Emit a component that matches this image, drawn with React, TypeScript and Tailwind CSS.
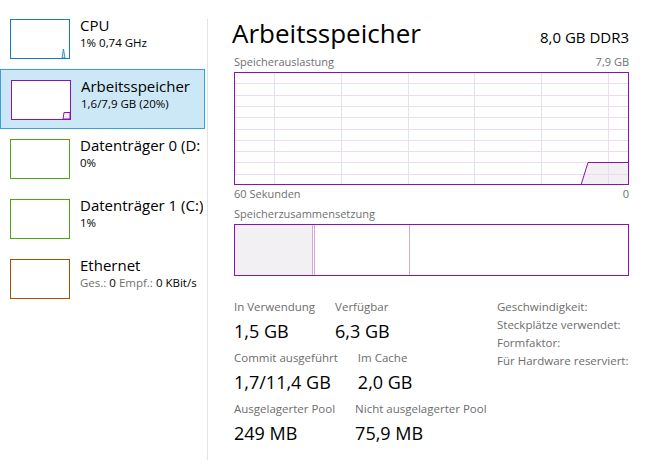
import React from "react";

type Item = {
  title: string;
  sub: React.ReactNode;
  border: string;
  selected?: boolean;
  thumb?: React.ReactNode;
};

function Thumb({ border, children }: { border: string; children?: React.ReactNode }) {
  return (
    <div className={`relative w-[60px] h-[40px] shrink-0 border bg-white ${border}`}>
      {children}
    </div>
  );
}

const items: Item[] = [
  {
    title: "CPU",
    sub: "1% 0,74 GHz",
    border: "border-[#117dbb]",
    thumb: (
      <svg className="absolute inset-0" width="58" height="38" viewBox="0 0 58 38">
        <path d="M51 38 L52.5 29 L54 38 Z" fill="#d9eaf5" stroke="#117dbb" strokeWidth="0.8" />
      </svg>
    ),
  },
  {
    title: "Arbeitsspeicher",
    sub: "1,6/7,9 GB (20%)",
    border: "border-[#8b12ae]",
    selected: true,
    thumb: (
      <svg className="absolute inset-0" width="58" height="38" viewBox="0 0 58 38">
        <path d="M51 38 L52 31.5 L58 31.5 L58 38 Z" fill="#f1edf2" stroke="#8b12ae" strokeWidth="1" />
      </svg>
    ),
  },
  { title: "Datenträger 0 (D: E:)", sub: "0%", border: "border-[#4da60c]" },
  { title: "Datenträger 1 (C:)", sub: "1%", border: "border-[#4da60c]" },
  {
    title: "Ethernet",
    sub: (
      <>
        <span className="text-[#707070]">Ges.:</span> 0 <span className="text-[#707070]">Empf.:</span> 0 KBit/s
      </>
    ),
    border: "border-[#a74f01]",
  },
];

function Sidebar() {
  return (
    <div className="w-[207px] shrink-0 pt-[9px]">
      {items.map((it) => (
        <div
          key={it.title}
          className={`w-[205px] h-[60px] flex gap-[10px] pl-[10px] pt-[10px] overflow-hidden ${
            it.selected ? "bg-[#cce8f6] border border-[#3a9fd9] pl-[9px] pt-[9px]" : ""
          }`}
        >
          <Thumb border={it.border}>{it.thumb}</Thumb>
          <div className="-mt-[4px] whitespace-nowrap overflow-hidden">
            <div className="text-[15px] leading-[20px] text-black">{it.title}</div>
            <div className="text-[11.5px] leading-[16px] text-black">{it.sub}</div>
          </div>
        </div>
      ))}
    </div>
  );
}

function UsageGraph() {
  const w = 395;
  const h = 113;
  const vx = [40, 107, 174, 240, 307, 374];
  const hy = Array.from({ length: 9 }, (_, i) => 11.3 * (i + 1));
  return (
    <svg width={w} height={h} viewBox={`0 0 ${w} ${h}`} className="block">
      <rect x="0" y="0" width={w} height={h} fill="#ffffff" />
      <path d={`M347 ${h} L354 90.5 L${w} 90.5 L${w} ${h} Z`} fill="#f2f0f3" />
      {vx.map((x) => (
        <line key={x} x1={x + 0.5} y1="0" x2={x + 0.5} y2={h} stroke="#ecdcef" strokeWidth="1" />
      ))}
      {hy.map((y) => (
        <line key={y} x1="0" y1={Math.round(y) + 0.5} x2={w} y2={Math.round(y) + 0.5} stroke="#ecdcef" strokeWidth="1" />
      ))}
      <path d={`M347 ${h} L354 90.5 L${w} 90.5`} fill="none" stroke="#8b12ae" strokeWidth="1" />
      <rect x="0.5" y="0.5" width={w - 1} height={h - 1} fill="none" stroke="#8b12ae" strokeWidth="1" />
    </svg>
  );
}

function CompositionBar() {
  const w = 395;
  const h = 52;
  return (
    <svg width={w} height={h} viewBox={`0 0 ${w} ${h}`} className="block">
      <rect x="0" y="0" width="78" height={h} fill="#f2f0f3" />
      <line x1="78.5" y1="0" x2="78.5" y2={h} stroke="#d3a9dc" />
      <line x1="80.5" y1="0" x2="80.5" y2={h} stroke="#d3a9dc" />
      <line x1="175.5" y1="0" x2="175.5" y2={h} stroke="#d3a9dc" />
      <rect x="0.5" y="0.5" width={w - 1} height={h - 1} fill="none" stroke="#8b12ae" strokeWidth="1" />
    </svg>
  );
}

function Stat({ label, value }: { label: string; value: string }) {
  return (
    <div className="whitespace-nowrap">
      <div className="text-[11.5px] leading-[16px] text-[#6d6d6d]">{label}</div>
      <div className="text-[18px] leading-[26px] mt-[3px] text-black">{value}</div>
    </div>
  );
}

export default function App() {
  return (
    <div className="w-[645px] h-[475px] bg-white flex overflow-hidden font-['Segoe_UI','Open_Sans',sans-serif]">
      <Sidebar />
      <div className="w-px bg-[#e3e3e3] mt-[19px] h-[441px] shrink-0" />
      <div className="flex-1 pl-[24px] pr-[16px]">
        <div className="flex items-baseline justify-between pt-[15px]">
          <div className="text-[26px] leading-[36px] text-black">Arbeitsspeicher</div>
          <div className="text-[15px] text-black">8,0 GB DDR3</div>
        </div>
        <div className="pl-[2px]">
          <div className="flex justify-between text-[11px] leading-[16px] text-[#707070] mt-[3px] mb-[2px]">
            <span>Speicherauslastung</span>
            <span>7,9 GB</span>
          </div>
          <UsageGraph />
          <div className="flex justify-between text-[11px] leading-[16px] text-[#707070] mt-[1px]">
            <span>60 Sekunden</span>
            <span>0</span>
          </div>
          <div className="text-[11px] leading-[16px] text-[#707070] mt-[4px] mb-[2px]">Speicherzusammensetzung</div>
          <CompositionBar />
          <div className="flex mt-[23px]">
            <div className="flex flex-col gap-[6px] w-[263px]">
              <div className="flex gap-[20px]">
                <Stat label="In Verwendung" value="1,5 GB" />
                <Stat label="Verfügbar" value="6,3 GB" />
              </div>
              <div className="flex gap-[20px]">
                <Stat label="Commit ausgeführt" value="1,7/11,4 GB" />
                <Stat label="Im Cache" value="2,0 GB" />
              </div>
              <div className="flex gap-[20px]">
                <Stat label="Ausgelagerter Pool" value="249 MB" />
                <Stat label="Nicht ausgelagerter Pool" value="75,9 MB" />
              </div>
            </div>
            <div className="text-[11.5px] leading-[18px] text-[#6d6d6d] -mt-[1px] whitespace-nowrap">
              <div>Geschwindigkeit:</div>
              <div>Steckplätze verwendet:</div>
              <div>Formfaktor:</div>
              <div>Für Hardware reserviert:</div>
            </div>
          </div>
        </div>
      </div>
    </div>
  );
}
